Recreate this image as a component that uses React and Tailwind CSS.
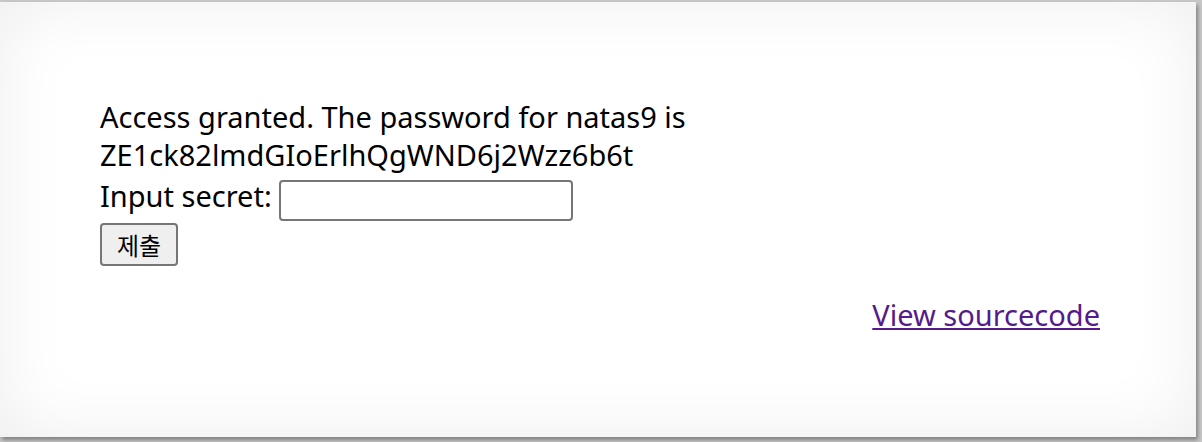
import React from 'react';

export default function App() {
  return (
    <div className="w-[1202px] h-[442px] bg-[#c8c8c8] overflow-hidden pt-[2px]" style={{ fontFamily: '"Noto Sans", "Noto Sans CJK KR", sans-serif' }}>
      <div className="w-[1196px] h-[435px] bg-white shadow-[inset_0_0_70px_rgba(0,0,0,0.07),2px_3px_4px_rgba(0,0,0,0.35)] pl-[100px] pr-[96px] pt-[96px] text-[29px] leading-[38px] text-black">
        <div>
          Access granted. The password for natas9 is
          <br />
          ZE1ck82lmdGIoErlhQgWND6j2Wzz6b6t
        </div>
        <form className="m-0">
          <div className="flex items-start mt-[3px]">
            <span>Input secret:</span>
            <input
              type="text"
              className="ml-[7px] mt-[3px] w-[294px] h-[41px] border-2 border-[#767676] rounded-[4px] bg-white outline-none"
            />
          </div>
          <button
            type="button"
            className="block mt-[2px] w-[78px] h-[43px] border-2 border-[#767676] rounded-[4px] bg-[#efefef] text-[24px] leading-none text-black"
            style={{ fontFamily: '"Noto Sans CJK KR", sans-serif' }}
          >
            제출
          </button>
        </form>
        <div className="text-right mt-[30px]">
          <a href="#" className="text-[#551a8b] underline">View sourcecode</a>
        </div>
      </div>
    </div>
  );
}
